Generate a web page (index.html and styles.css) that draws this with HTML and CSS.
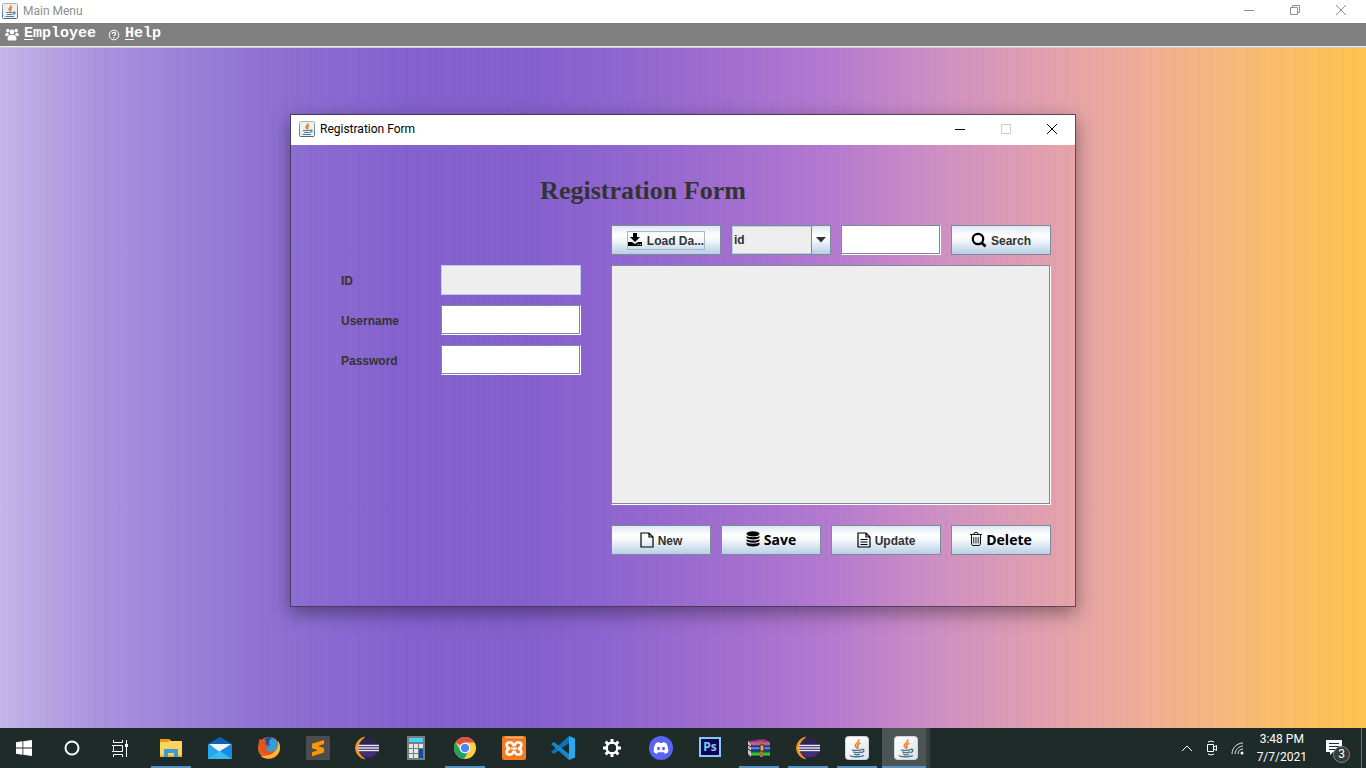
FILE: index.html
```html
<!DOCTYPE html>
<html lang="en">
<head>
<meta charset="utf-8">
<title>Main Menu</title>
<link rel="stylesheet" href="styles.css">
</head>
<body>
<svg class="defs" aria-hidden="true">
  <defs>
    <linearGradient id="edge" x1="0" y1="0" x2="0" y2="1"><stop offset="0" stop-color="#9db6c8"/><stop offset="1" stop-color="#456b86"/></linearGradient>
    <linearGradient id="cup" x1="0" y1="0" x2="1" y2="1"><stop offset="0" stop-color="#fff"/><stop offset="1" stop-color="#dfe3e6"/></linearGradient>
    <symbol id="java-glyph" viewBox="0 0 24 24">
      <path d="M13.6 3.5c1.6 2.8-3.6 3.9-3.3 6.1.1 1.2 1.4 1.7 1.8 3M15.6 7.2c-2.2.8-3.6 1.9-2.8 3.2.6 1 .5 1.6-.3 2.3" fill="none" stroke="#e8832b" stroke-width="1.6"/>
      <path d="M7.5 13.6c-1.2.9 7 1.1 9.500.1M8 15.800c1.600 1 6.100 1 8 0M9 18c1.500.8 4.500.8 6 0M16.500 13.500c2.800-1.100 3.600 2-.2 3.300M5.500 19.300c-1.500 1.600 10.500 2.200 13.500.2" fill="none" stroke="#47738f" stroke-width="1.300"/>
    </symbol>
    <symbol id="java-small" viewBox="0 0 16 16">
      <rect x=".5" y=".5" width="15" height="15" rx="1" fill="#edf0f2" stroke="url(#edge)"/>
      <path d="M8.800 2c1 2-2.300 2.600-1.800 4.500.2.800.8 1 1 1.800M10.300 4.300c-1.500.7-2.200 1.300-1.500 2.400.3.600.2 1-.3 1.400" fill="none" stroke="#e98224" stroke-width="1.400"/>
      <path d="M4 9.500h7.500M5 11.500h5.500M3.500 13.500h8.500M11.500 9c2.200-.3 2.200 2-.5 2.200" fill="none" stroke="#557d97" stroke-width="1.200"/>
    </symbol>
    <symbol id="java-tile" viewBox="0 0 24 24">
      <rect x=".5" y=".5" width="23" height="23" rx="3" fill="url(#cup)" stroke="#cfd6da"/>
      <use href="#java-glyph" width="24" height="24"/>
    </symbol>
    <symbol id="eclipse" viewBox="0 0 24 24">
      <path d="M9.500 1.200A11 11 0 0 0 9.500 22.800 13 13 0 0 1 9.500 1.200z" fill="#f7941e" stroke="#f7941e"/>
      <circle cx="13.500" cy="12" r="10.300" fill="#2c2255"/>
      <path d="M4.500 16h18a10.300 10.300 0 0 1-18 0z" fill="#412f79"/>
      <path d="M3 9.500h21M2.500 12h21.500M3 14.500h21" stroke="#e8e6f2" stroke-width="1.700"/>
    </symbol>
  </defs>
</svg>

<header class="titlebar">
  <svg class="app-icon"><use href="#java-small"/></svg>
  <h1 class="titlebar-text">Main Menu</h1>
  <div class="window-controls">
    <button class="control" aria-label="Minimize"><svg width="10" height="10"><path d="M0 5.500h10"/></svg></button>
    <button class="control" aria-label="Restore"><svg width="10" height="10"><path d="M.5 2.500h7v7h-7zM2.500 2.500v-2h7v7h-2"/></svg></button>
    <button class="control" aria-label="Close"><svg width="10" height="10"><path d="M0 0l10 10M10 0L0 10"/></svg></button>
  </div>
</header>

<nav class="menubar">
  <button class="menu"><svg width="14" height="14" viewBox="0 0 14 14" fill="#fff"><circle cx="2.800" cy="3.600" r="1.800"/><circle cx="11.200" cy="3.600" r="1.800"/><circle cx="7" cy="5" r="2.400"/><path d="M.3 9V7.500C.3 6 1.500 5.800 2.800 6L4 7.200 2.700 9zM13.700 9V7.500c0-1.500-1.200-1.700-2.500-1.500L10 7.200 11.300 9zM2.500 12.500C2.500 9.500 3.500 8 5 8h4c1.500 0 2.500 1.500 2.500 4.500l-1 1h-7z"/></svg><span><u>E</u>mployee</span></button>
  <button class="menu"><svg width="12" height="14" viewBox="0 0 12 14" fill="none" stroke="#fff"><circle cx="6" cy="8" r="4.800"/><path d="M4.300 6.900c0-2.200 3.400-2 3.400 0 0 1-1.700 1-1.700 2.200M6 10v1.200" stroke-width="1.200"/></svg><span><u>H</u>elp</span></button>
</nav>

<main class="desktop">
  <section class="dialog" aria-labelledby="dialog-title">
    <div class="dialog-bar">
      <svg class="app-icon"><use href="#java-small"/></svg>
      <span class="dialog-name">Registration Form</span>
      <div class="window-controls">
        <button class="control" aria-label="Minimize"><svg width="10" height="10"><path d="M0 5.500h10"/></svg></button>
        <button class="control" aria-label="Maximize" disabled><svg width="10" height="10"><path d="M.5.5h9v9h-9z"/></svg></button>
        <button class="control" aria-label="Close"><svg width="10" height="10"><path d="M0 0l10 10M10 0L0 10"/></svg></button>
      </div>
    </div>
    <div class="dialog-body">
      <h2 class="heading" id="dialog-title">Registration Form</h2>
      <form class="fields">
        <label for="user-id">ID</label><input class="field" id="user-id" type="text" disabled>
        <label for="username">Username</label><input class="field" id="username" type="text">
        <label for="password">Password</label><input class="field" id="password" type="password">
      </form>
      <div class="records">
        <div class="toolbar">
          <button class="button wide"><span class="focus-ring"><svg width="14" height="13" viewBox="0 0 14 13"><path d="M5 0h4v4h3L7 9 2 4h3zM0 9h4l3 2 3-2h4v4H0z"/><path d="M9.500 11.500h1M11.800 11.500h1" stroke="#fff"/></svg>Load Da...</span></button>
          <div class="combo">
            <select aria-label="Search by"><option>id</option><option>username</option></select>
            <span class="combo-arrow"><svg width="12" height="6"><path d="M1 0h10L6 5.500z"/></svg></span>
          </div>
          <input class="field" type="text" aria-label="Search text">
          <button class="button"><svg width="16" height="16" viewBox="0 0 16 16" fill="none" stroke="#000"><circle cx="7" cy="7" r="5.200" stroke-width="2.200"/><path d="M10.500 10.500l4 4" stroke-width="2.600"/></svg>Search</button>
        </div>
        <div class="results"></div>
        <div class="toolbar">
          <button class="button"><svg width="14" height="16" viewBox="0 0 14 16" fill="none" stroke="#000" stroke-width="1.200"><path d="M1 1h8l4 4v10H1zM9 1v4h4"/></svg>New</button>
          <button class="button strong"><svg width="14" height="16" viewBox="0 0 14 16"><ellipse cx="7" cy="2.800" rx="6.500" ry="2.600"/><path d="M.5 5c2 1.600 11 1.600 13 0v1.500c-1 2.500-12 2.500-13 0zM.5 8.300c2 1.600 11 1.600 13 0v1.500c-1 2.500-12 2.500-13 0zM.5 11.600c2 1.600 11 1.600 13 0v1.600c-1 2.900-12 2.900-13 0z"/></svg>Save</button>
          <button class="button wide"><svg width="14" height="16" viewBox="0 0 14 16" fill="none" stroke="#000" stroke-width="1.200"><path d="M1 1h8l4 4v10H1zM9 1v4h4M3.500 7.500h7M3.500 10h7M3.500 12.500h7"/></svg>Update</button>
          <button class="button strong"><svg width="12" height="14" viewBox="0 0 12 14" fill="none" stroke="#111"><path d="M0 2.500h12M3.500 2.500L4.500.6h3l1 1.900M1.500 3v9l1 1.500h7l1-1.500V3"/><path d="M3.500 5v6.500M5.200 5v6.500M6.900 5v6.500M8.600 5v6.500" stroke-width=".9" stroke="#444"/></svg>Delete</button>
        </div>
      </div>
    </div>
  </section>
</main>

<footer class="taskbar">
  <div class="system">
    <button class="task" aria-label="Start"><svg width="16" height="16" viewBox="0 0 16 16" fill="#fff"><path d="M0 2.200l6.500-.9v6.200H0zM7.300 1.200L16 0v7.500H7.300zM0 8.500h6.500v6.200L0 13.800zM7.300 8.500H16V16l-8.700-1.200z"/></svg></button>
    <button class="task" aria-label="Search"><svg width="16" height="16"><circle cx="8" cy="8" r="6.500" fill="none" stroke="#fff" stroke-width="2"/></svg></button>
    <button class="task" aria-label="Task view"><svg width="17" height="17" fill="none" stroke="#fff"><path d="M1.500 0v2.500h9V0M1.500 5.500h9v6h-9zM0 5.500h1M0 11.500h1M1.500 17v-2.500h9V17M14.500 0v17"/><path d="M13 4h3v3h-3z" fill="#fff" stroke="none"/></svg></button>
  </div>
  <div class="apps">
    <button class="task running" aria-label="File Explorer"><svg width="24" height="24" viewBox="0 0 24 24"><path d="M1 3h9l2 2h11v15H1z" fill="#ffd45e"/><path d="M1 3h9v3H1z" fill="#e59c0d"/><path d="M1 19h22v2H1z" fill="#efb934"/><path d="M5 13h14v8h-4v-4H9v4H5z" fill="#3c9ad5"/></svg></button>
    <button class="task" aria-label="Mail"><svg width="24" height="24" viewBox="0 0 24 24"><path d="M0 8L12 1l12 7v4H0z" fill="#0d63b8"/><path d="M1 8h22L12 17z" fill="#f4f5fa"/><path d="M0 8l12 8L24 8v15H0z" fill="#28a8ea"/><path d="M0 23l12-8 12 8z" fill="#35bdf2"/><path d="M12 15l12-7v15z" fill="#168be0"/></svg></button>
    <button class="task" aria-label="Firefox"><svg width="24" height="24" viewBox="0 0 24 24"><circle cx="12" cy="12" r="11" fill="#e95d22"/><path d="M21 5c4 6 2 13-4 16-6 3-11 1-13-1 11 1 17-5 17-15z" fill="#ffb631"/><circle cx="13.500" cy="9" r="7.500" fill="#3a9bd2"/><path d="M6 8c0-5 5-8 10-6-4 1-5 4-3 7l-4 3z" fill="#17529c"/><path d="M1.800 9C1.500 6 2 4 3 2.500L5 5c2-1 3-1 4.500-.5C8 6 8.500 7.500 9 8.500l3 .5-3 3c0 4 5 5 9 2-3 6-10 6-13 1z" fill="#e0551f"/></svg></button>
    <button class="task" aria-label="Sublime Text"><svg width="24" height="24" viewBox="0 0 24 24"><rect width="24" height="24" rx="1.500" fill="#4c4c4c"/><path d="M6 7.700L18 4v4l-6 2 6 2v4.500L6 20.200v-4l6-2-6-2z" fill="#ff9800"/></svg></button>
    <button class="task" aria-label="Eclipse"><svg width="24" height="24"><use href="#eclipse"/></svg></button>
    <button class="task" aria-label="Calculator"><svg width="24" height="24" viewBox="0 0 24 24"><path d="M3 0h18v24H3z" fill="#747e84"/><path d="M5 2h14v4H5z" fill="#45d5f5"/><path d="M5 8h4v4H5zM10 8h4v4h-4zM15 8h4v4h-4zM5 13h4v4H5zM10 13h4v4h-4zM5 18h4v4H5zM10 18h4v4h-4z" fill="#e2e7eb"/><path d="M15 13h4v9h-4z" fill="#104f9b"/></svg></button>
    <button class="task running" aria-label="Chrome"><svg width="24" height="24" viewBox="0 0 24 24"><circle cx="12" cy="12" r="11" fill="#ffce44"/><path d="M12 12L2.500 6.500A11 11 0 0 1 21.500 6.500H12z" fill="#dd4e43"/><path d="M2.500 6.500a11 11 0 0 0 8.500 16.500l5-8.500H7.500z" fill="#1ca261"/><circle cx="12" cy="12" r="5.400" fill="#fff"/><circle cx="12" cy="12" r="4.200" fill="#4b88f0"/></svg></button>
    <button class="task" aria-label="XAMPP"><svg width="24" height="24" viewBox="0 0 24 24"><rect width="24" height="24" rx="2" fill="#f47920"/><path d="M3 1.500h18" stroke="#fbb583" stroke-width="1.500"/><path d="M8 12.500C4 12 3.500 6.500 7 6.500h2c2 0 1.500 3 3 3s1-3 3-3h2c3.500 0 3 5.500-1 6 4 .5 4.500 6 1 6h-2c-2 0-1.500-3-3-3s-1 3-3 3H7c-3.500 0-3-5.500 1-6z" fill="none" stroke="#fff" stroke-width="2.600"/><path d="M9 12.500h6" stroke="#fff" stroke-width="2"/></svg></button>
    <button class="task" aria-label="Visual Studio Code"><svg width="24" height="24" viewBox="0 0 24 24"><path d="M18 0v7L3 18l-3-2z" fill="#0873bd"/><path d="M0 8l3-2 15 12v6z" fill="#1588cd"/><path d="M18 0l6 2.500v19L18 24z" fill="#29a9f2"/></svg></button>
    <button class="task" aria-label="Settings"><svg width="20" height="20" viewBox="0 0 20 20" fill="none" stroke="#fff"><circle cx="10" cy="10" r="5.300" stroke-width="2.400"/><path d="M10 1v4M10 15v4M1 10h4M15 10h4M3.600 3.600l3 3M13.400 13.400l3 3M16.400 3.600l-3 3M6.600 13.400l-3 3" stroke-width="3"/><circle cx="10" cy="10" r="4" fill="#1f2b29" stroke="none"/></svg></button>
    <button class="task" aria-label="Discord"><svg width="24" height="24" viewBox="0 0 24 24"><circle cx="12" cy="12" r="12" fill="#5865f2"/><path d="M7 7l3-1 .6 1h2.800l.6-1 3 1c2 3 2.500 6 2.200 9.300L16 18l-1-1.800H9L8 18l-3.200-1.700C4.500 13 5 10 7 7z" fill="#fff"/><ellipse cx="9.500" cy="12.500" rx="1.500" ry="1.700" fill="#5865f2"/><ellipse cx="14.500" cy="12.500" rx="1.500" ry="1.700" fill="#5865f2"/></svg></button>
    <button class="task" aria-label="Photoshop"><span class="ps">Ps</span></button>
    <button class="task running" aria-label="WinRAR"><svg width="24" height="24" viewBox="0 0 24 24"><path d="M1 5l16-2 6 3v4H4z" fill="#9c327d"/><path d="M4 10h19v5H4z" fill="#2349d4"/><path d="M4 15h19v6H4z" fill="#1a9228"/><path d="M4 7h19M5 9h18" stroke="#d78ab8"/><path d="M4 12h19" stroke="#8bb2ff"/><path d="M4 18h19" stroke="#69e35b"/><path d="M1 5l3 3v13l-3-3z" fill="#d3c2c6"/><path d="M1 9l3 2M1 13l3 2M4 10h19M4 15h19M4 20.500h19" stroke="#201b2c"/><path d="M12 4l3 1 1 4v12h-3V9z" fill="#a6743b"/><path d="M13 9h4v6h-4z" fill="#d2ae68" stroke="#452d18"/></svg></button>
    <button class="task running" aria-label="Eclipse workspace"><svg width="24" height="24"><use href="#eclipse"/></svg></button>
    <button class="task running" aria-label="Java"><svg width="24" height="24"><use href="#java-tile"/></svg></button>
    <button class="task running active" aria-label="Registration Form"><svg width="24" height="24"><use href="#java-tile"/></svg></button>
  </div>
  <div class="tray">
    <svg width="12" height="8"><path d="M1 7l5-5 5 5"/></svg>
    <svg width="12" height="16"><path d="M1.500 4.500h6v7h-6zM8 7l2.500-1.500v5L8 9M2 2q3-2 6 0M2 14q3 2 6 0"/></svg>
    <svg width="13" height="13"><path d="M1 12C1 6 6 1 12 1M4 12c0-4 4-8 8-8M7 12c0-3 2-5 5-5" stroke="#dfe3e2"/><circle cx="11" cy="11" r="1.500" fill="#fff" stroke="none"/></svg>
    <div class="clock"><time>3:48 PM</time><time datetime="2021-07-07">7/7/2021</time></div>
    <button class="notifications" aria-label="3 notifications"><svg width="16" height="16"><path d="M0 0h16v12H7l-3 3v-3H0z" fill="#fff" stroke="none"/><path d="M3 3.500h10M3 6.500h10M3 9.500h6" stroke="#1f2b29"/></svg><span class="badge">3</span></button>
  </div>
</footer>
</body>
</html>
```
FILE: styles.css
```css
* { box-sizing: border-box; }

body {
  margin: 0;
  min-height: 100vh;
  display: flex;
  flex-direction: column;
  font-family: Roboto, "Open Sans", sans-serif;
  font-size: 12px;
}

button { border: 0; padding: 0; background: none; font: inherit; color: inherit; }
svg { flex: none; }
.defs { position: absolute; width: 0; height: 0; }

.titlebar {
  display: flex;
  align-items: center;
  gap: 5px;
  height: 23px;
  padding: 0 2px 1px;
  background: #fff;
  color: #8f8f8f;
}
.titlebar-text { margin: 0; font-size: 12px; font-weight: 400; }
.app-icon { width: 16px; height: 16px; }
.window-controls { display: flex; height: 100%; margin-left: auto; }
.control {
  display: flex;
  align-items: center;
  justify-content: center;
  width: 46px;
}
.titlebar .control { padding-bottom: 2px; }
.control svg { fill: none; stroke: currentColor; }
.control:disabled { color: #ccc; }

.menubar {
  display: flex;
  gap: 12px;
  height: 25px;
  padding: 0 5px;
  background: #808080;
  border-bottom: 1px solid #ccc;
  box-shadow: inset 0 -1px #eee;
}
.menu {
  display: flex;
  align-items: flex-start;
  gap: 5px;
  color: #fff;
  font: bold 15px/22px "Liberation Mono", monospace;
}
.menu svg { margin-top: 4px; }
.menu u { text-underline-offset: 2px; text-decoration-thickness: 1px; }

.desktop {
  flex: 1;
  padding: 66px 20px 40px;
  background:
    repeating-linear-gradient(90deg, rgba(255,255,255,.01) 0 2px, transparent 2px 9px, rgba(0,0,0,.01) 9px 12px),
    linear-gradient(90deg, #c3b5e8 0%, #ab94de 7%, #8f72d3 19%, #8461ce 30%, #8560cd 39%, #9166cf 46%, #a36fcf 54%, #b57acf 61%, #cd8ec5 68%, #e3a1ad 77%, #f1b092 85%, #f9bd6d 93%, #ffc34e 100%);
}

.dialog {
  max-width: 786px;
  margin: 0 auto;
  border: 1px solid rgba(50,40,60,.75);
  box-shadow: 0 6px 18px rgba(0,0,0,.4);
}
.dialog-bar {
  display: flex;
  align-items: center;
  gap: 5px;
  height: 30px;
  padding: 0 0 2px 8px;
  background: #fff;
  color: #000;
}
.dialog-body {
  display: grid;
  grid-template-columns: 240px 1fr;
  column-gap: 30px;
  padding: 30px 24px 51px 50px;
  color: #333;
  font: bold 12px/16px "Liberation Sans", sans-serif;
}
.heading {
  grid-column: 1 / -1;
  margin: 0 0 18px;
  padding-right: 106px;
  text-align: center;
  font: bold 26px/32px "Liberation Serif", serif;
}
.fields {
  display: grid;
  grid-template-columns: 100px 1fr;
  grid-auto-rows: 30px;
  gap: 10px 0;
  align-items: center;
  align-content: start;
  padding-top: 40px;
}
.fields label { padding-top: 2px; }
.field {
  width: 100%;
  min-width: 0;
  height: 30px;
  padding: 0 4px;
  border: 1px solid;
  border-color: #7a8a99 #fff #fff #7a8a99;
  box-shadow: inset -1px -1px #7a8a99;
  background: #fff;
  font: inherit;
}
.field:disabled { background: #eee; border-color: #b8cfe5; box-shadow: none; }

.records { display: flex; flex-direction: column; gap: 10px; }
.toolbar { display: flex; gap: 10px; height: 30px; }
.toolbar > * { flex: 1 1 100px; }
.toolbar > .wide { flex-basis: 110px; }
.results {
  height: 240px;
  margin-bottom: 10px;
  border: 1px solid;
  border-color: #7a8a99 #fff #fff #7a8a99;
  box-shadow: inset -1px -1px #7a8a99;
  background: #eee;
}
.button {
  display: flex;
  align-items: center;
  justify-content: center;
  gap: 4px;
  padding-top: 1px;
  border: 1px solid #7a8a99;
  background: linear-gradient(#dde8f3, #fff 32%, #f4f8fb 50%, #b8cfe5);
}
.button svg { margin-bottom: 2px; }
.strong { padding-top: 0; color: #000; font: bold 14px/18px "Open Sans", sans-serif; }
.focus-ring {
  display: flex;
  align-items: center;
  gap: 5px;
  height: 19px;
  border: 1px solid #a3b8cc;
}

.combo { display: grid; grid-template-columns: 1fr 20px; }
.combo select {
  grid-area: 1 / 1 / 2 / 3;
  appearance: none;
  padding: 0 20px 0 2px;
  border: 1px solid #7a8a99;
  border-radius: 0;
  box-shadow: inset 0 0 0 1px #b8cfe5;
  background: #eee;
  color: #333;
  font: inherit;
}
.combo-arrow {
  grid-area: 1 / 2;
  display: flex;
  align-items: center;
  justify-content: center;
  border: 1px solid #7a8a99;
  background: linear-gradient(#dde8f3, #fff 32%, #f4f8fb 50%, #b8cfe5);
  pointer-events: none;
}
.combo-arrow svg { fill: #333; }

.taskbar { display: flex; height: 40px; background: #1f2b29; color: #fff; }
.system { display: flex; margin-right: 3px; }
.apps { display: flex; gap: 1px; }
.task {
  display: flex;
  align-items: center;
  justify-content: center;
  width: 48px;
  height: 40px;
}
.running { background: linear-gradient(#5590c3, #5590c3) center bottom / 40px 2px no-repeat; }
.active {
  background: linear-gradient(#5590c3, #5590c3) center bottom / 48px 2px no-repeat, #4b5654;
  box-shadow: inset -4px 0 #35413f;
}
.ps {
  width: 22px;
  height: 20px;
  margin-bottom: 2px;
  border: 2px solid #8bc5fa;
  background: #0c0752;
  color: #8bc5fa;
  font: bold 12px/16px "Open Sans", sans-serif;
}
.tray { display: flex; align-items: center; gap: 13px; margin-left: auto; padding-right: 4px; }
.tray > svg { fill: none; stroke: #fff; }
.clock { display: flex; flex-direction: column; text-align: center; line-height: 18px; }
.notifications {
  position: relative;
  display: flex;
  align-items: center;
  width: 42px;
  height: 40px;
  padding-left: 6px;
  border-right: 1px solid #687270;
}
.badge {
  position: absolute;
  left: 13px;
  top: 18px;
  width: 17px;
  height: 17px;
  border: 1px solid #838a89;
  border-radius: 50%;
  background: #333c3b;
  font-size: 12px;
  line-height: 15px;
  text-align: center;
}
```
